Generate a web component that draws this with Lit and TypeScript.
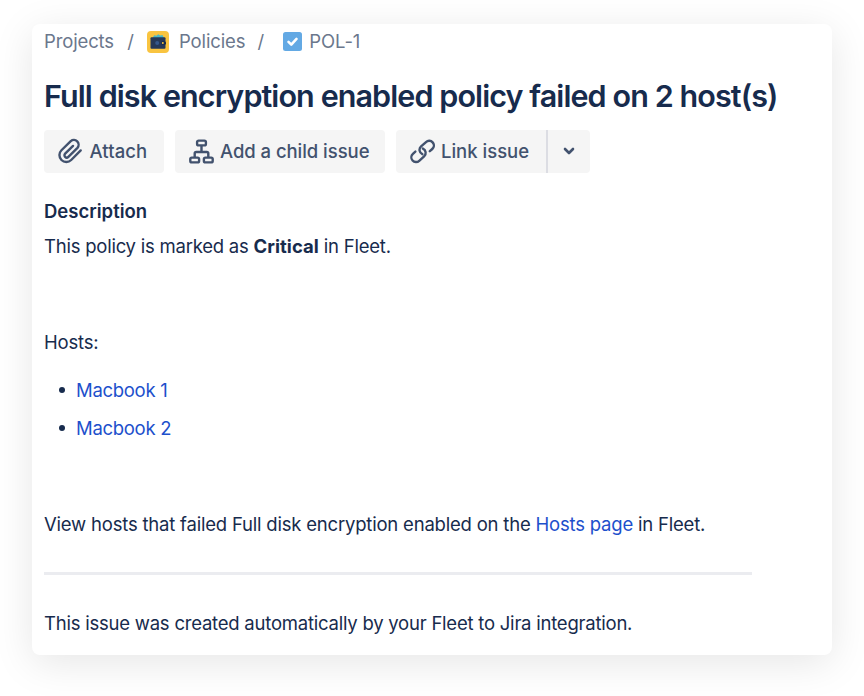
import { LitElement, html, css } from "lit";
import { customElement } from "lit/decorators.js";

@customElement("app-root")
export class AppRoot extends LitElement {
  static styles = css`
    :host { display: block; box-sizing: border-box; height: 696px; padding: 24px 32px 0; background: #fff; overflow: hidden;
      font-family: Inter, "Liberation Sans", sans-serif; font-size: 18.5px; color: #172b4d; }
    * { box-sizing: border-box; }
    svg { display: block; flex: none; }
    .card { width: 800px; height: 631px; border-radius: 8px; background: #fff; padding: 0 12px; box-shadow: 0 8px 40px rgba(0,0,0,.1); display: flex; flex-direction: column; align-items: flex-start; white-space: nowrap; }
    .crumbs { height: 35px; display: flex; align-items: center; color: #6b778c; letter-spacing: -.13px; }
    .crumbs span { height: 24px; line-height: 23px; }
    .sep { width: 33px; text-align: center; }
    .wallet { margin-right: 10px; }
    .sep.last { width: 38px; padding-right: 7px; }
    .check { margin-right: 7px; }
    h1 { margin: 17px 0 0; height: 40px; line-height: 40px; font-size: 30.5px; font-weight: 600; letter-spacing: -.91px; }
    .actions { display: flex; margin-top: 13.5px; height: 43px; color: #42526e; font-weight: 500; }
    .btn { height: 43px; background: #f5f5f5; border-radius: 4px; display: flex; align-items: center; }
    .btn span { height: 24px; line-height: 24px; }
    .attach { width: 119.5px; padding-left: 13px; gap: 6.5px; margin-right: 11.5px; letter-spacing: .1px; }
    .child { width: 210px; padding-left: 14px; gap: 6px; margin-right: 11px; letter-spacing: -.05px; }
    .link { width: 150px; padding-left: 14px; gap: 6px; border-radius: 4px 0 0 4px; }
    .more { width: 44px; border-left: 2px solid #dcdde3; border-radius: 0 4px 4px 0; padding-left: 14px; }
    h2 { margin: 23.5px 0 0; font-size: 18.5px; font-weight: 600; height: 30px; line-height: 30px; }
    p { margin: 0; height: 30px; line-height: 30px; letter-spacing: -.2px; }
    .lead { margin-top: 5px; letter-spacing: -.23px; }
    .hosts { margin-top: 66px; }
    b { font-weight: 700; letter-spacing: .05px; }
    a { color: #1d50cc; text-decoration: none; }
    ul { list-style: none; margin: 18px 0 0; padding: 0 0 0 15px; letter-spacing: -.3px; }
    li { height: 30px; display: flex; align-items: center; gap: 11px; margin-bottom: 8px; }
    li::before { content: ""; width: 6px; height: 6px; border-radius: 50%; background: #172b4d; }
    .view { margin-top: 58px; }
    .rule { width: 708px; height: 2.5px; background: #ebecf0; margin-top: 33px; }
    .foot { margin-top: 33.5px; letter-spacing: -.225px; }
  `;

  render() {
    return html`<main class="card">
      <nav class="crumbs">
        <span>Projects</span><span class="sep">/</span>
        <svg class="wallet" width="22" height="22" viewBox="0 0 22 22">
          <rect width="22" height="22" rx="4" fill="#f9c440"/>
          <path d="M5.5 7 7.2 4.2l2.2.5 1.8-1.5 2 1.2 2.3-.3L17 7z" fill="#4bb8c9"/>
          <rect x="3.5" y="6.3" width="15" height="11.4" rx="1" fill="#253858"/>
          <circle cx="10.2" cy="12" r="2" fill="#35588c"/>
          <rect x="14" y="10.2" width="5" height="3.6" rx="1.5" fill="#172b4d"/>
          <circle cx="15.8" cy="12" r="1" fill="#f9c440"/>
        </svg>
        <span>Policies</span><span class="sep last">/</span>
        <svg class="check" width="19" height="19" viewBox="0 0 19 19">
          <rect width="19" height="19" rx="2.5" fill="#63a9e4"/>
          <path d="m5.5 9.8 2.8 2.8 5.2-5.7" fill="none" stroke="#fff" stroke-width="2.6" stroke-linecap="round" stroke-linejoin="round"/>
        </svg>
        <span>POL-1</span>
      </nav>
      <h1>Full disk encryption enabled policy failed on 2 host(s)</h1>
      <div class="actions">
        <div class="btn attach">
          <svg width="26" height="26" viewBox="0 0 24 24" fill="none" stroke="currentColor" stroke-width="2.2" stroke-linecap="round" stroke-linejoin="round"><path d="m21.9 11.5-8.8 8.8a6.3 6.3 0 0 1-9-9l8.6-8.4a4.4 4.4 0 0 1 6.2 6.2l-8.4 8.4a2.1 2.1 0 0 1-3-3l7.3-7.2"/></svg>
          <span>Attach</span>
        </div>
        <div class="btn child">
          <svg width="25" height="25" viewBox="0 0 25 25" fill="none" stroke="currentColor" stroke-width="2.4"><rect x="8.1" y="1.6" width="8.8" height="4.8" rx="1.5"/><rect x="1.3" y="18.6" width="8.8" height="4.8" rx="1.5"/><rect x="14.9" y="18.6" width="8.8" height="4.8" rx="1.5"/><path d="M12.5 6.5V13M5.7 18.6v-4.1q0-1.5 1.5-1.5h10.6q1.5 0 1.5 1.5v4.1"/></svg>
          <span>Add a child issue</span>
        </div>
        <div class="btn link">
          <svg width="25" height="25" viewBox="0 0 25 25" fill="none" stroke="currentColor" stroke-width="2.4" stroke-linecap="round"><g transform="translate(12.6 12.4) rotate(-42)"><path d="M5.5 4.7H8.8a4.7 4.7 0 0 0 0-9.4H2.2a4.7 4.7 0 0 0-4.3 6.6"/><path d="M-5.5-4.7H-8.8a4.7 4.7 0 0 0 0 9.4H-2.2a4.7 4.7 0 0 0 4.3-6.6"/></g></svg>
          <span>Link issue</span>
        </div>
        <div class="btn more">
          <svg width="14" height="10" viewBox="0 0 14 10" fill="none" stroke="currentColor" stroke-width="2.6" stroke-linecap="round" stroke-linejoin="round"><path d="m3 3 4 4 4-4"/></svg>
        </div>
      </div>
      <h2>Description</h2>
      <p class="lead">This policy is marked as <b>Critical</b> in Fleet.</p>
      <p class="hosts">Hosts:</p>
      <ul><li><a>Macbook 1</a></li><li><a>Macbook 2</a></li></ul>
      <p class="view">View hosts that failed Full disk encryption enabled on the <a>Hosts page</a> in Fleet.</p>
      <div class="rule"></div>
      <p class="foot">This issue was created automatically by your Fleet to Jira integration.</p>
    </main>`;
  }
}
